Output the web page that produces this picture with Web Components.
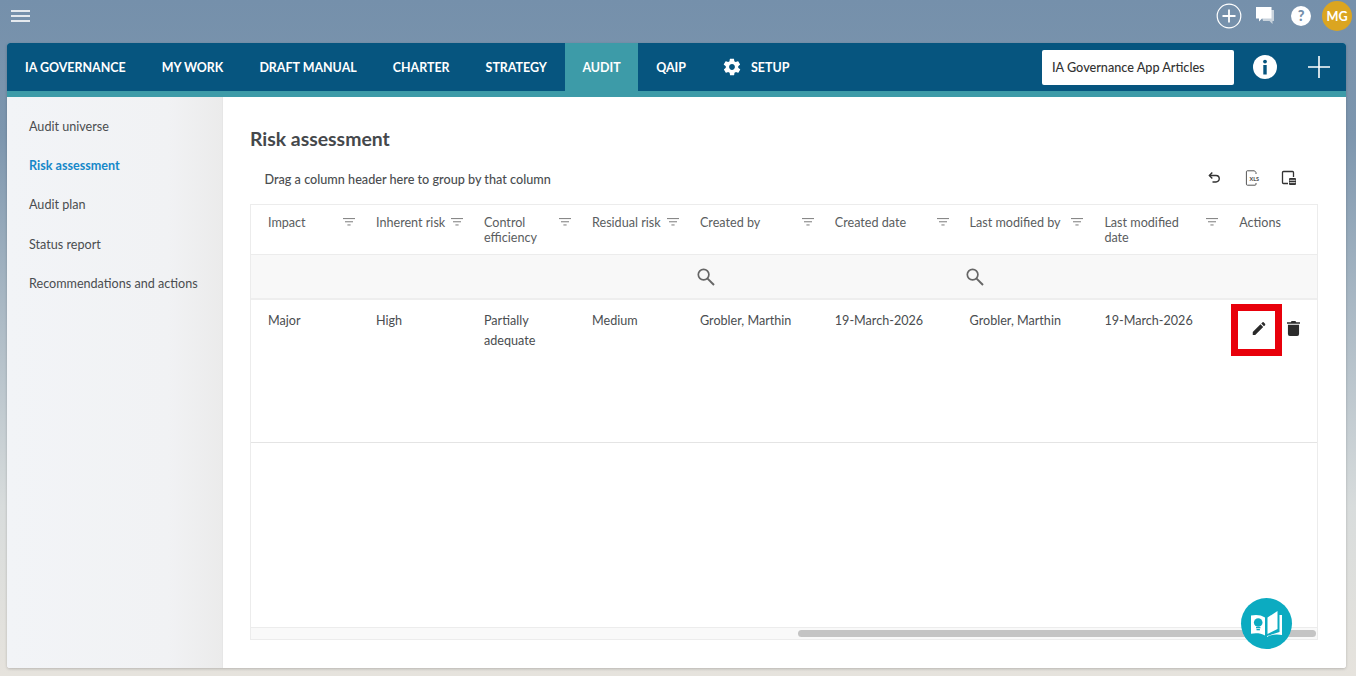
<!DOCTYPE html>
<html lang="en">
<head>
<meta charset="utf-8">
<title>Risk assessment</title>
<style>
  html, body { margin: 0; height: 100%; }
  body {
    width: 1356px;
    height: 676px;
    overflow: hidden;
    font-family: 'Lato', 'Liberation Sans', sans-serif;
    background: linear-gradient(180deg, #7590ab 0%, #7d96ae 20%, #a9b8c4 45%, #d8dcdc 75%, #e6e3dd 100%);
  }
</style>
</head>
<body>
<app-shell>
  <top-bar slot="top"></top-bar>
  <main-nav slot="nav"></main-nav>
  <side-menu slot="side"></side-menu>
  <risk-page slot="main"></risk-page>
</app-shell>

<script>
// shared icon strings
const ICONS = {
  filter: `<svg width="12" height="8" viewBox="0 0 12 8" fill="#888"><rect x="0" y="0" width="12" height="1.1"/><rect x="2" y="3.2" width="8" height="1.1"/><rect x="4.4" y="6.4" width="3.2" height="1.1"/></svg>`,
  search: `<svg width="20" height="20" viewBox="0 0 20 20" fill="none" stroke="#666" stroke-width="1.7"><circle cx="7.6" cy="7.6" r="5.3"/><path d="M11.6 11.6 L18 18" stroke-width="2"/></svg>`,
  gear: `<svg width="20" height="20" viewBox="0 0 24 24" fill="#fff"><path d="M19.4 13c.1-.3.1-.7.1-1s0-.7-.1-1l2.1-1.6c.2-.2.2-.4.1-.6l-2-3.5c-.1-.2-.4-.3-.6-.2l-2.5 1c-.5-.4-1.1-.7-1.7-1l-.4-2.6c0-.3-.2-.4-.5-.4h-4c-.3 0-.5.2-.5.4l-.4 2.6c-.6.3-1.2.6-1.7 1l-2.5-1c-.2-.1-.5 0-.6.2l-2 3.5c-.1.2-.1.5.1.6L4.6 11c0 .3-.1.7-.1 1s0 .7.1 1l-2.1 1.6c-.2.2-.2.4-.1.6l2 3.5c.1.2.4.3.6.2l2.5-1c.5.4 1.1.7 1.7 1l.4 2.6c0 .3.2.4.5.4h4c.3 0 .5-.2.5-.4l.4-2.6c.6-.3 1.2-.6 1.7-1l2.5 1c.2.1.5 0 .6-.2l2-3.5c.1-.2.1-.5-.1-.6L19.4 13zM12 15.5c-1.9 0-3.5-1.6-3.5-3.5s1.6-3.5 3.5-3.5 3.5 1.6 3.5 3.5-1.6 3.5-3.5 3.5z"/></svg>`
};

class AppShell extends HTMLElement {
  constructor() {
    super();
    this.attachShadow({ mode: 'open' });
    this.shadowRoot.innerHTML = `
      <style>
        :host { display: block; width: 1356px; height: 676px; }
        .card {
          margin: 0 10px 0 7px;
          height: 625px;
          display: grid;
          grid-template-rows: 54px 571px;
          grid-template-columns: 216px 1fr;
          border-radius: 3px;
          overflow: hidden;
          box-shadow: 0 1px 3px rgba(0,0,0,.2);
          background: #fff;
        }
        .nav { grid-column: 1 / 3; }
      </style>
      <slot name="top"></slot>
      <div class="card">
        <div class="nav"><slot name="nav"></slot></div>
        <slot name="side"></slot>
        <slot name="main"></slot>
      </div>`;
  }
}

class TopBar extends HTMLElement {
  constructor() {
    super();
    this.attachShadow({ mode: 'open' });
    this.shadowRoot.innerHTML = `
      <style>
        :host { display: flex; height: 43px; box-sizing: border-box; padding: 0 4px 11px 11px; align-items: center; justify-content: space-between; }
        .right { display: flex; align-items: center; }
        svg { display: block; }
        .avatar {
          width: 30px; height: 30px; border-radius: 50%; background: #dba520; color: #fff;
          font-size: 12.65px; font-weight: 700; display: flex; align-items: center; justify-content: center; margin-left: 11px;
        }
      </style>
      <svg width="19" height="12" viewBox="0 0 19 12" fill="#e4e9ee"><rect width="19" height="2"/><rect y="5" width="19" height="2"/><rect y="10" width="19" height="2"/></svg>
      <div class="right">
        <svg width="26" height="26" viewBox="0 0 26 26" fill="none" stroke="#fff"><circle cx="13" cy="13" r="11.8" stroke-width="1.2"/><path d="M13 6.5v13M6.5 13h13" stroke-width="1.8"/></svg>
        <svg style="margin:-1px 0 0 14px" width="18" height="17" viewBox="0 0 18 17"><path d="M4 3h14v11h-1.5v3l-3-3H7z" fill="#c9d3dc"/><path d="M0 0h15.5v11.5H6l-3 3v-3H0z" fill="#fff"/></svg>
        <svg style="margin-left:17px" width="20" height="20" viewBox="0 0 20 20"><circle cx="10" cy="10" r="10" fill="#fff"/><text x="10" y="15" text-anchor="middle" font-family="Lato, sans-serif" font-weight="900" font-size="14.5" fill="#7590ab">?</text></svg>
        <div class="avatar">MG</div>
      </div>`;
  }
}

class MainNav extends HTMLElement {
  constructor() {
    super();
    this.attachShadow({ mode: 'open' });
    const items = ['IA GOVERNANCE', 'MY WORK', 'DRAFT MANUAL', 'CHARTER', 'STRATEGY', 'AUDIT', 'QAIP'];
    this.shadowRoot.innerHTML = `
      <style>
        :host { display: flex; height: 54px; box-sizing: border-box; background: #06557f; border-bottom: 6px solid #3d9ba8; color: #fff; font-size: 12.45px; font-weight: 700; }
        a { display: flex; align-items: center; gap: 9px; padding: 0 18px; white-space: nowrap; }
        a.on { background: #3d9ba8; margin-bottom: -6px; padding-bottom: 6px; padding-left: 17.5px; padding-right: 17.5px; }
        .end { margin-left: auto; display: flex; align-items: center; font-size: 12.65px; }
        .search {
          width: 192px; height: 35px; box-sizing: border-box; background: #fff; border-radius: 2px; color: #333;
          font-weight: 500; padding-left: 10px; display: flex; align-items: center;
        }
        .info { margin-left: 19px; }
        .plus { margin: 0 16px 0 31px; }
        svg { display: block; }
      </style>
      ${items.map(t => `<a class="${t === 'AUDIT' ? 'on' : ''}">${t}</a>`).join('')}
      <a>${ICONS.gear}SETUP</a>
      <div class="end">
        <div class="search">IA Governance App Articles</div>
        <svg class="info" width="24" height="24" viewBox="0 0 24 24"><circle cx="12" cy="12" r="12" fill="#fff"/><circle cx="12" cy="6.6" r="1.9" fill="#06557f"/><rect x="10.3" y="10" width="3.4" height="9.5" fill="#06557f"/></svg>
        <svg class="plus" width="22" height="22" viewBox="0 0 22 22" stroke="#fff" stroke-width="1.6"><path d="M11 0v22M0 11h22"/></svg>
      </div>`;
  }
}

class SideMenu extends HTMLElement {
  constructor() {
    super();
    this.attachShadow({ mode: 'open' });
    const items = ['Audit universe', 'Risk assessment', 'Audit plan', 'Status report', 'Recommendations and actions'];
    this.shadowRoot.innerHTML = `
      <style>
        :host {
          display: flex; flex-direction: column; box-sizing: border-box; padding: 9.5px 0 0 22px;
          background: linear-gradient(90deg, #f2f4f7 0%, #f1f2f4 75%, #ebebeb 100%);
          border-right: 1px solid #e6e6e6;
          font-size: 12.6px; color: #4a4d50;
        }
        a { height: 39.4px; display: flex; align-items: center; white-space: nowrap; }
        a.on { color: #1688c9; font-weight: 700; }
      </style>
      ${items.map(t => `<a class="${t === 'Risk assessment' ? 'on' : ''}">${t}</a>`).join('')}`;
  }
}

class RiskPage extends HTMLElement {
  constructor() {
    super();
    this.attachShadow({ mode: 'open' });
    this.shadowRoot.innerHTML = `
      <style>
        :host { display: flex; flex-direction: column; position: relative; box-sizing: border-box; padding: 0 28px 28px 27px; background: #fff; color: #4a4d50; }
        h1 { margin: 0; height: 29px; padding-top: 28px; font-size: 19.4px; line-height: 27px; font-weight: 700; color: #45484b; box-sizing: content-box; }
        .group { display: flex; align-items: center; justify-content: space-between; height: 50px; padding: 0 21px 0 14.5px; font-size: 12.65px; font-weight: 500; }
        .tools { display: flex; gap: 20px; align-items: center; margin-top: -2px; }
        .tools svg:first-child { margin-right: 2px; transform: translateX(-1px); }
        svg { display: block; }
        .fab { position: absolute; right: 54px; bottom: 19px; width: 51px; height: 51px; border-radius: 50%; background: #0cabc1; display: flex; align-items: center; justify-content: center; }
      </style>
      <h1>Risk assessment</h1>
      <div class="group">
        <span>Drag a column header here to group by that column</span>
        <div class="tools">
          <svg width="16" height="16" viewBox="0 0 16 16" fill="none" stroke="#333" stroke-width="1.4"><path d="M3.5 5.5h6.5a3.2 3.2 0 0 1 0 6.5H6.5"/><path d="M6.3 2.6 3.4 5.5l2.9 2.9"/></svg>
          <svg width="16" height="16" viewBox="0 0 16 16" fill="none" stroke="#555" stroke-width="1"><path d="M11 4V2.6L9.5 .8H2.2A1 1 0 0 0 1.4 1.8v12.4a1 1 0 0 0 1 1H10a1 1 0 0 0 1-1V13"/><text x="4.6" y="10.6" font-family="Lato, sans-serif" font-size="5.4" font-weight="900" fill="#555" stroke="none">XLS</text></svg>
          <svg width="16" height="16" viewBox="0 0 16 16" fill="none" stroke="#333" stroke-width="1.3"><path d="M7 13.5H2.5a1 1 0 0 1-1-1V2.5a1 1 0 0 1 1-1h9a1 1 0 0 1 1 1V7"/><rect x="8" y="8" width="7" height="7" rx="1" fill="#333" stroke="none"/><path d="M8.5 10.3h6M8.5 12.6h6" stroke="#fff" stroke-width=".8"/></svg>
        </div>
      </div>
      <risk-grid></risk-grid>
      <div class="fab">
        <svg width="31" height="26" viewBox="0 0 31 26"><path d="M0 4.5c4-1 10-1 14 2v18c-4-2.6-10-2.6-14-1.8z" fill="#fff"/><path d="M16.5 6.5 26.5 0v18L16.5 23z" fill="#fff"/><path d="M28.5 4H31v20c-4.2-.8-11-.8-15 2v-1l12.500-4z" fill="#fff"/><circle cx="7.200" cy="11.500" r="4.300" fill="#0cabc1"/><rect x="5" y="16" width="4.400" height="1.300" fill="#0cabc1"/><rect x="5.500" y="18" width="3.400" height="1.300" fill="#0cabc1"/></svg>
      </div>`;
  }
}

class RiskGrid extends HTMLElement {
  constructor() {
    super();
    this.attachShadow({ mode: 'open' });
    const cols = ['Impact', 'Inherent risk', 'Control efficiency', 'Residual risk', 'Created by', 'Created date', 'Last modified by', 'Last modified date'];
    const row = ['Major', 'High', 'Partially adequate', 'Medium', 'Grobler, Marthin', '19-March-2026', 'Grobler, Marthin', '19-March-2026'];
    const head = cols.map(c => `<div class="th"><span>${c}</span><i>${ICONS.filter}</i></div>`).join('');
    const filters = cols.map((c, i) => `<div class="fc">${(i === 4 || i === 6) ? ICONS.search : ''}</div>`).join('');
    const cells = row.map(c => `<div class="td">${c}</div>`).join('');
    this.shadowRoot.innerHTML = `
      <style>
        :host { display: flex; flex-direction: column; flex: 1; position: relative; border: 1px solid #ececec; font-size: 12.6px; color: #4a4d50; min-height: 0; }
        .cols { display: grid; grid-template-columns: 108px 108px 108px 108px 134.8px 134.8px 134.8px 134.8px 1fr; }
        .head { height: 49px; border-bottom: 1px solid #ececec; box-sizing: content-box; color: #5a5d60; }
        .th { display: flex; padding: 10px 4px 0 17px; line-height: 15px; gap: 4px; align-items: flex-start; }
        .th span { flex: 1 1 auto; }
        .th i { flex: none; display: block; padding-top: 3px; }
        .th svg { display: block; }
        .filters { height: 43px; background: #f8f8f8; border-bottom: 2px solid #eeeeee; }
        .fc { display: flex; align-items: center; padding: 1px 0 0 12.5px; }
        .rows { height: 143px; border-bottom: 1px solid #e4e4e4; box-sizing: border-box; }
        .td { padding: 11px 10px 0 17px; line-height: 20px; }
        .actions { display: flex; gap: 5px; padding: 4px 0 0 8.500px; align-items: flex-start; }
        .mark { box-sizing: border-box; width: 51px; height: 52px; border: 7px solid #e8000b; display: flex; align-items: center; justify-content: center; flex: none; }
        .mark svg { transform: translate(2.500px, -2px); }
        .trash { margin-top: 16px; }
        svg { display: block; }
        .spacer { flex: 1; }
        .scroll { height: 11px; background: #f9f9f9; border-top: 1px solid #ececec; display: flex; align-items: center; justify-content: flex-end; padding-right: 1px; }
        .thumb { width: 518px; height: 7px; border-radius: 4px; background: #c4c4c4; }
      </style>
      <div class="cols head">${head}<div class="th"><span>Actions</span></div></div>
      <div class="cols filters">${filters}<div></div></div>
      <div class="cols rows">${cells}
        <div class="actions">
          <div class="mark"><svg width="13" height="13" viewBox="3 3 18 18" fill="#2a2a2a"><path d="M3 17.25V21h3.75L17.81 9.94l-3.75-3.75L3 17.25zM20.71 7.04a1 1 0 0 0 0-1.41l-2.34-2.34a1 1 0 0 0-1.41 0l-1.83 1.83 3.75 3.75 1.83-1.83z"/></svg></div>
          <svg class="trash" width="13" height="16" viewBox="0 0 14 17" fill="#2b2b2b"><path d="M0 2.2h4L5 1h4l1 1.2h4v1.8H0z"/><path d="M1 5h12v10a2 2 0 0 1-2 2H3a2 2 0 0 1-2-2z"/></svg>
        </div>
      </div>
      <div class="spacer"></div>
      <div class="scroll"><div class="thumb"></div></div>`;
  }
}

customElements.define('app-shell', AppShell);
customElements.define('top-bar', TopBar);
customElements.define('main-nav', MainNav);
customElements.define('side-menu', SideMenu);
customElements.define('risk-page', RiskPage);
customElements.define('risk-grid', RiskGrid);
</script>
</body>
</html>
